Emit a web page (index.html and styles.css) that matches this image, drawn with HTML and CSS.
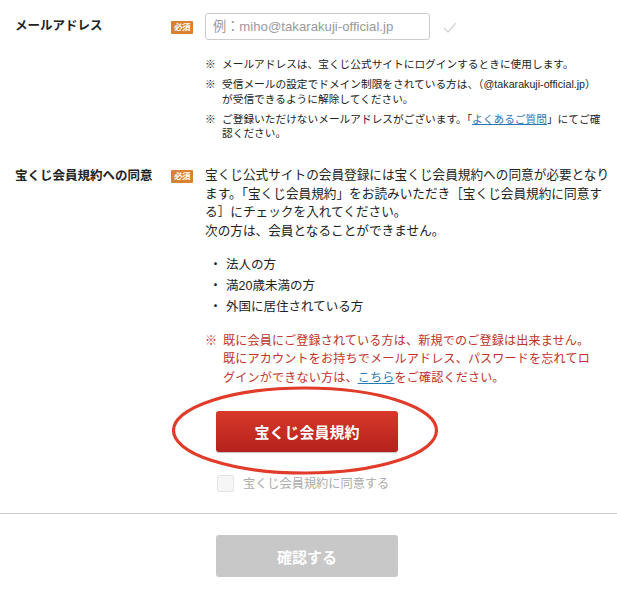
FILE: index.html
```html
<!DOCTYPE html>
<html lang="ja">
<head>
<meta charset="utf-8">
<title>会員登録</title>
<link rel="stylesheet" href="styles.css">
</head>
<body>
<main class="form">
  <section class="row row-email">
    <div class="label">メールアドレス</div>
    <span class="badge">必須</span>
    <div class="content">
      <div class="field">
        <input class="input" type="text" placeholder="例：miho@takarakuji-official.jp">
        <svg class="check" width="14" height="11" viewBox="0 0 14 11"><polyline points="1,6 5,10 13,1" fill="none" stroke="#d6d6d6" stroke-width="1.4"/></svg>
      </div>
      <ul class="notes">
        <li><span class="mark">※</span><span>メールアドレスは、宝くじ公式サイトにログインするときに使用します。</span></li>
        <li><span class="mark">※</span><span>受信メールの設定でドメイン制限をされている方は、（@takarakuji-official.jp）<br>が受信できるように解除してください。</span></li>
        <li><span class="mark">※</span><span>ご登録いただけないメールアドレスがございます。「<a href="#">よくあるご質問</a>」にてご確<br>認ください。</span></li>
      </ul>
    </div>
  </section>

  <section class="row row-terms">
    <div class="label">宝くじ会員規約への同意</div>
    <span class="badge">必須</span>
    <div class="content">
      <p class="intro">宝くじ公式サイトの会員登録には宝くじ会員規約への同意が必要となり<br>ます。「宝くじ会員規約」をお読みいただき［宝くじ会員規約に同意す<br>る］にチェックを入れてください。<br>次の方は、会員となることができません。</p>
      <ul class="bullets">
        <li><span class="dot">・</span><span>法人の方</span></li>
        <li><span class="dot">・</span><span>満20歳未満の方</span></li>
        <li><span class="dot">・</span><span>外国に居住されている方</span></li>
      </ul>
      <p class="warn"><span class="mark">※</span><span>既に会員にご登録されている方は、新規でのご登録は出来ません。<br>既にアカウントをお持ちでメールアドレス、パスワードを忘れてロ<br>グインができない方は、<a href="#">こちら</a>をご確認ください。</span></p>
    </div>
  </section>

  <div class="terms-action">
    <div class="terms-btn-wrap">
      <button class="btn btn-terms" type="button">宝くじ会員規約</button>
      <svg class="circle" width="270" height="90" viewBox="0 0 270 90"><ellipse cx="134" cy="44.5" rx="131.5" ry="42.5" fill="none" stroke="#e03c29" stroke-width="3.2"/></svg>
    </div>
    <label class="agree"><span class="box"></span><span>宝くじ会員規約に同意する</span></label>
  </div>

  <hr class="divider">

  <div class="submit">
    <button class="btn btn-submit" type="button">確認する</button>
  </div>
</main>
</body>
</html>
```

FILE: styles.css
```css
* { box-sizing: border-box; }
html, body { margin: 0; padding: 0; background: #fff; }
body {
  font-family: "Liberation Sans", "Noto Sans CJK JP", sans-serif;
  color: #333;
  width: 617px;
}
.form { padding-top: 13px; }
.row {
  display: flex;
  align-items: flex-start;
  padding-left: 15px;
}
.label {
  width: 156px;
  font-size: 12.5px;
  font-weight: bold;
  color: #222;
  line-height: 27px;
  flex: none;
}
.badge {
  flex: none;
  width: 22px;
  height: 13px;
  margin-top: 8px;
  margin-right: 12px;
  background: #d9812c;
  color: #fff;
  font-size: 8.5px;
  font-weight: bold;
  line-height: 13px;
  text-align: center;
  letter-spacing: -0.5px;
  border-radius: 1px;
}
.content { flex: 1; min-width: 0; }
.field { display: flex; align-items: center; }
.input {
  width: 225px;
  height: 27px;
  border: 1px solid #ccc;
  border-radius: 3px;
  padding: 0 7px;
  font-family: inherit;
  font-size: 13.2px;
  color: #333;
  background: #fff;
  outline: none;
}
.input::placeholder { color: #9a9a9a; }
.check { margin-left: 13px; margin-top: 2px; }

.notes {
  list-style: none;
  margin: 17px 0 0;
  padding: 0;
  font-size: 10.7px;
  line-height: 14.5px;
  color: #222;
}
.notes li { display: flex; margin-bottom: 5.5px; }
.notes .mark { flex: none; width: 17px; }
a { color: #2a79b5; text-decoration: underline; }

.row-terms { margin-top: 20px; }
.row-terms .label { line-height: 20px; }
.row-terms .badge { margin-top: 4px; }
.intro {
  margin: 0;
  font-size: 12.65px;
  line-height: 18.7px;
  color: #222;
  white-space: nowrap;
}
.bullets {
  list-style: none;
  margin: 14px 0 0;
  padding: 0;
  font-size: 12.5px;
  line-height: 21px;
  color: #222;
}
.bullets li { display: flex; }
.bullets .dot { flex: none; width: 21px; text-align: center; }
.warn {
  display: flex;
  margin: 14px 0 0;
  font-size: 12.1px;
  line-height: 18.5px;
  color: #c0322a;
  letter-spacing: 0.15px;
  white-space: nowrap;
}
.warn .mark { flex: none; width: 18px; }

.terms-action {
  padding-left: 216px;
  margin-top: 24px;
}
.terms-btn-wrap { position: relative; width: 182px; }
.btn {
  display: block;
  width: 182px;
  height: 41px;
  border: none;
  border-radius: 3px;
  font-family: inherit;
  font-size: 15px;
  font-weight: bold;
  color: #fff;
  padding: 0;
}
.btn-terms {
  background: linear-gradient(#d7392a, #b5211b);
  box-shadow: 0 1px 1px rgba(0,0,0,0.25);
}
.circle {
  position: absolute;
  left: -45px;
  top: -25px;
  pointer-events: none;
}
.agree {
  display: flex;
  align-items: center;
  margin-top: 22px;
  font-size: 12.2px;
  color: #aaa;
}
.box {
  width: 17px;
  height: 17px;
  border: 1px solid #e4e4e4;
  background: #f6f6f6;
  border-radius: 2px;
  margin-right: 9px;
  margin-left: 1px;
}
.divider {
  border: none;
  border-top: 1px solid #cfcfcf;
  margin: 21px 0 0;
}
.submit { padding: 21px 0 0 216px; }
.btn-submit { background: #c8c8c8; height: 42px; }
```
